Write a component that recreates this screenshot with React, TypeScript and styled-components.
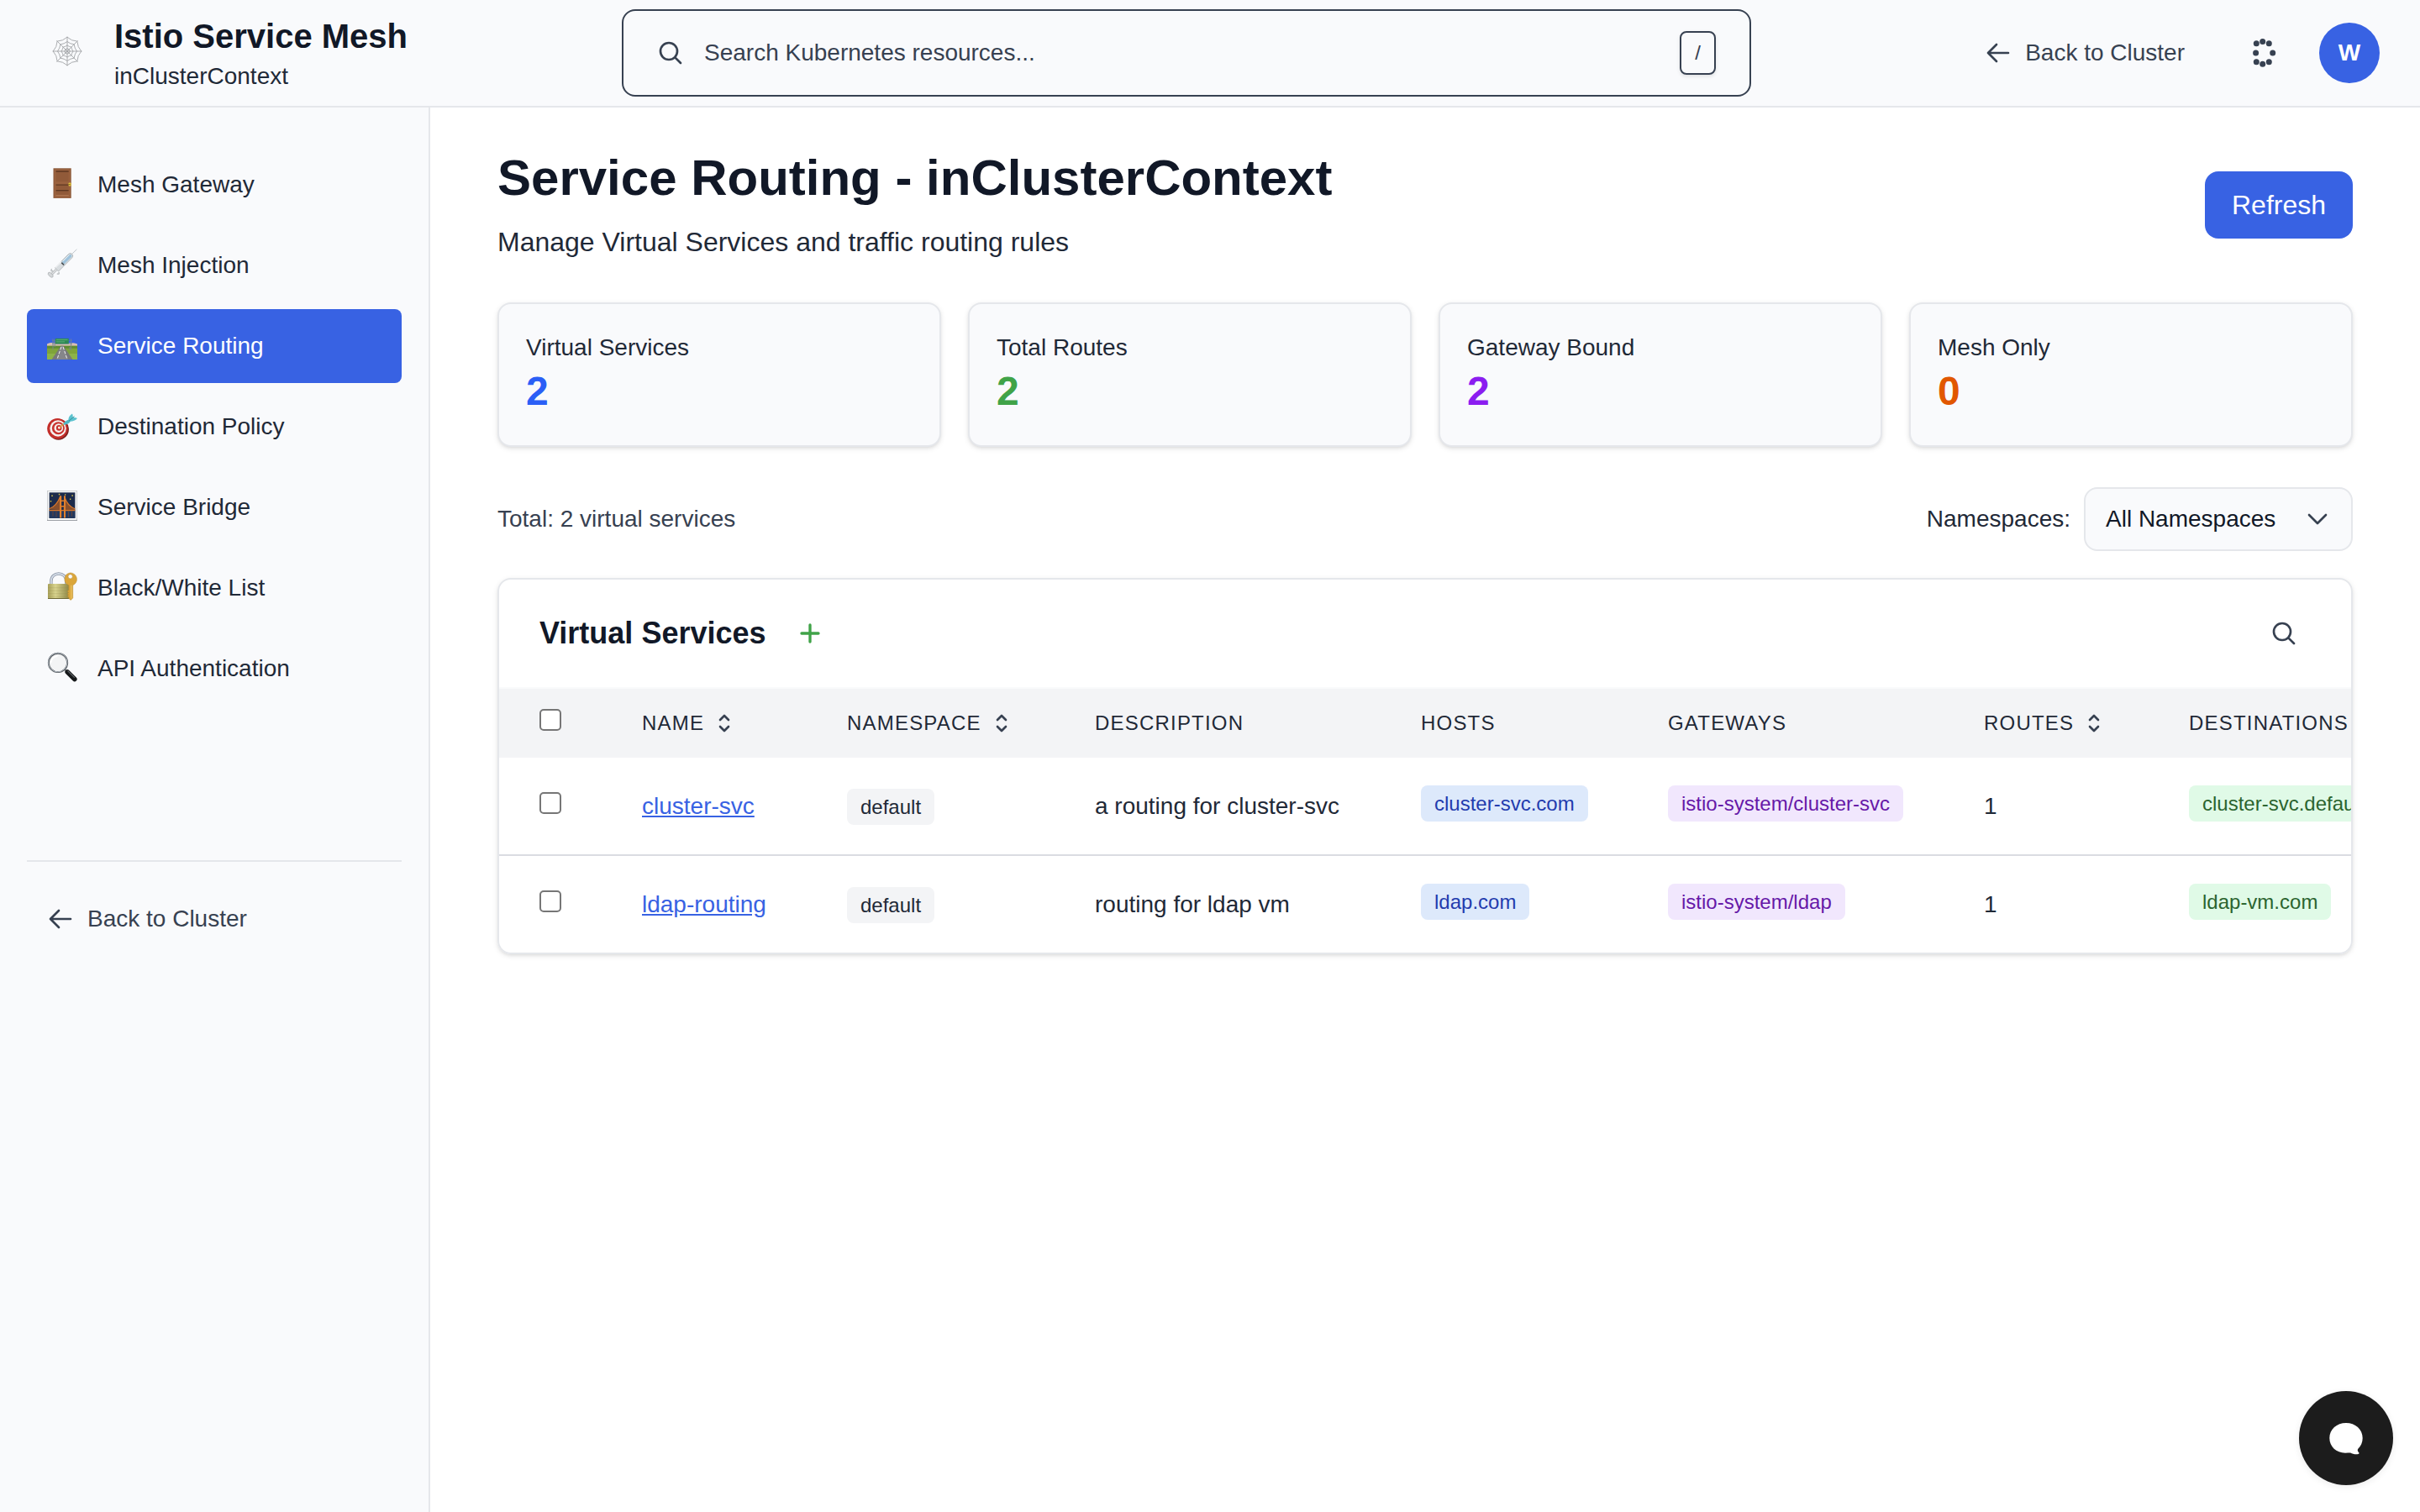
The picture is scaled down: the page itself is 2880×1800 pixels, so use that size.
import React from "react";
import styled, { createGlobalStyle, css } from "styled-components";

const Global = createGlobalStyle`
  * { box-sizing: border-box; }
  html, body { margin: 0; padding: 0; }
  body {
    background: #ffffff;
    font-family: "Liberation Sans", Arial, Helvetica, sans-serif;
    font-size: 28px;
    line-height: 40px;
    color: #1f2937;
    overflow: hidden;
  }
`;

const color = {
  surface: "#f9fafc",
  border: "#e5e7eb",
  ink: "#111827",
  text: "#1f2937",
  muted: "#374151",
  blue: "#3862e3",
};

/* ---------- icons ---------- */

const Glyph = styled.svg<{ $size?: number; $stroke?: number }>`
  display: block;
  flex: none;
  width: ${(p) => p.$size ?? 32}px;
  height: ${(p) => p.$size ?? 32}px;
  fill: none;
  stroke: currentColor;
  stroke-width: ${(p) => p.$stroke ?? 2};
  stroke-linecap: round;
  stroke-linejoin: round;
`;

const Icon = ({ d, stroke, size }: { d: string; stroke?: number; size?: number }) => (
  <Glyph viewBox="0 0 24 24" $stroke={stroke} $size={size}>
    <path d={d} />
  </Glyph>
);

const paths = {
  search: "m21 21-5.197-5.197m0 0A7.5 7.5 0 1 0 5.196 5.196a7.5 7.5 0 0 0 10.607 10.607Z",
  arrowLeft: "M10.5 19.5 3 12m0 0 7.5-7.5M3 12h18",
  chevronDown: "m19.5 8.25-7.5 7.5-7.5-7.5",
  sort: "M8.25 15 12 18.75 15.75 15m-7.5-6L12 5.25 15.75 9",
  plus: "M12 4.5v15m7.5-7.5h-15",
};

const Emoji = styled.svg`
  display: block;
  flex: none;
  width: 36px;
  height: 36px;
  margin-bottom: 4px;
  overflow: visible;
`;

const ring = (r: number, sag: number) => {
  const pts = Array.from({ length: 8 }, (_, i) => {
    const a = (i * Math.PI) / 4;
    return [18 + r * Math.sin(a), 18 - r * Math.cos(a)];
  });
  let d = `M${pts[0][0].toFixed(1)} ${pts[0][1].toFixed(1)}`;
  for (let i = 0; i < 8; i++) {
    const a = ((i + 0.5) * Math.PI) / 4;
    const n = pts[(i + 1) % 8];
    d += `Q${(18 + r * sag * Math.sin(a)).toFixed(1)} ${(18 - r * sag * Math.cos(a)).toFixed(1)} ${n[0].toFixed(1)} ${n[1].toFixed(1)}`;
  }
  return d + "Z";
};

const WebIcon = () => (
  <Emoji viewBox="0 0 36 36" fill="none" stroke="#a3a5a8" strokeWidth="0.9">
    <path d="M18 .5v35M.5 18h35M5.4 5.4l25.2 25.2M30.6 5.4 5.4 30.6" />
    <path d={ring(16.8, 0.78)} />
    <path d={ring(11.5, 0.82)} />
    <path d={ring(7, 0.84)} />
    <path d={ring(3.2, 0.9)} />
  </Emoji>
);

const DoorIcon = () => (
  <Emoji viewBox="0 0 36 36">
    <rect x="7.5" y="0.3" width="21.2" height="35.6" fill="#8a5637" />
    <rect x="8.6" y="1.4" width="19" height="34" fill="#9b623f" />
    <path d="M10.5 3.6h15.2v12.6H10.5z" fill="#915a39" />
    <path d="M10.5 3.3h15.2v1.4H10.5zM10.5 19.5h15.2v1.2H10.5zM10.5 26h15.2v1.5H10.5z" fill="#5d3721" />
    <path d="M10.5 21h15.2v4.6H10.5zM10.5 28h15.2v4H10.5z" fill="#915a39" />
    <path d="M10.5 32h15.2v.9H10.5z" fill="#b07a55" />
    <rect x="25.6" y="17.4" width="3" height="4.2" rx="0.8" fill="#e2c43c" />
    <rect x="25.2" y="19" width="2.4" height="1.1" fill="#8d7420" />
  </Emoji>
);

const SyringeIcon = () => (
  <Emoji viewBox="0 0 36 36">
    <path d="M29.5 6.5 35.4.8" stroke="#b9c0c5" strokeWidth="0.9" />
    <path d="M5.6 24.2c-1.6 2.2-.2 3 1.6 2.2M11.8 29.8c2.6 1 3-.4 2-2" stroke="#b4b8ba" strokeWidth="1.3" fill="none" />
    <path d="m9.4 22.9 15.7-16c1.8-1.8 3.8-1.6 5 0 1 1.4.6 3-.8 4.4L13.6 27z" fill="#d9dde0" stroke="#a7adb1" strokeWidth="0.8" />
    <path d="M17.6 15.9 25.7 7.7c1.3-1.2 2.6-1 3.3 0 .6.9.4 1.9-.6 2.9L20.3 18.6z" fill="#9fc3dc" />
    <path d="m19 14.9 7.6-7.6" stroke="#dcecf6" strokeWidth="1" />
    <path d="m16.6 17.2 2.9 2.9 1.2-1.2-2.9-2.9z" fill="#4a5054" />
    <path d="m9.8 22.6 7.2-7" stroke="#f7f8f9" strokeWidth="1.3" />
    <path d="m5 31 6-6" stroke="#aeb2b5" strokeWidth="2.8" />
    <path d="m5 31 6-6" stroke="#e4e6e7" strokeWidth="1.3" />
    <ellipse cx="4.2" cy="31.2" rx="3.7" ry="2" transform="rotate(45 4.2 31.2)" fill="#d5d8da" stroke="#a9adb0" strokeWidth="0.7" />
  </Emoji>
);

const MotorwayIcon = () => (
  <Emoji viewBox="0 0 36 36">
    <g transform="translate(0 1)">
      <path d="M0 16.5c4-2.2 8-1.4 12-.8h13c4-.8 8-.2 11 .8v3H0z" fill="#d9bfb4" />
      <path d="M0 18.8h36V35H0z" fill="#7fa43a" />
      <path d="M0 18.8h36v3H0z" fill="#5f8c33" />
      <path d="M0 28h36v7H0z" fill="#8db348" />
      <path d="M16.5 18.8h3L30.5 35h-25z" fill="#77787a" />
      <path d="M16.8 18.8h2.4L25 35H11z" fill="#85868a" />
      <path d="m16.9 20-5 15M19.1 20l5 15" stroke="#f2f2f2" strokeWidth="1" strokeDasharray="3.5 1.8" />
      <path d="M7 10.500v13M9.200 11v9M28.600 10.500v13M27 20v4" stroke="#7c8690" strokeWidth="0.9" />
      <path d="M6 12.5h24M6 16h24" stroke="#5d7f9e" strokeWidth="0.8" />
      <rect x="9.8" y="9.9" width="16" height="6.5" fill="#2f8a54" />
      <path d="M11 11.600h13.500M11 13.900h10" stroke="#66b583" strokeWidth="0.8" />
    </g>
  </Emoji>
);

const TargetIcon = () => (
  <Emoji viewBox="0 0 36 36">
    <g transform="translate(0 2)">
      <ellipse cx="13.6" cy="21.2" rx="12.300" ry="12.500" fill="#7c1f1c" />
      <circle cx="12.4" cy="20.3" r="12.2" fill="#c42f2b" />
      <circle cx="13" cy="20" r="9.7" fill="#f6f1ef" />
      <circle cx="13.4" cy="19.8" r="7.5" fill="#c9322e" />
      <circle cx="13.8" cy="19.6" r="5.3" fill="#f6f1ef" />
      <circle cx="14.2" cy="19.4" r="3.3" fill="#c9322e" />
      <circle cx="14.5" cy="19.2" r="1.4" fill="#fff" />
      <path d="m14.8 19 7-6" stroke="#d9a441" strokeWidth="1.4" />
      <path d="M19.4 15.600c0-2.600 2.400-4.600 6.400-6.200l2.200 2.200c-2 3-4.800 4.400-8.600 4z" fill="#4fb6c4" />
      <path d="M25.4 10.200C25.400 6.800 27 4.200 30 2.600c.8 1.800.9 3.200.6 4.600 1.900-.4 3.800-.1 5.400.8-2 2.600-5.200 3.800-8.600 3.800z" fill="#5cc3cf" />
      <path d="m26 11 6.500-5.400" stroke="#2c8391" strokeWidth="0.9" />
    </g>
  </Emoji>
);

const BridgeIcon = () => (
  <Emoji viewBox="0 0 36 36">
    <rect x="0.4" y="0.4" width="35.2" height="35.2" fill="#fbfbfb" stroke="#c3c6c9" strokeWidth="0.8" />
    <path d="M0 35.4h36" stroke="#989ca1" strokeWidth="1" />
    <rect x="2.6" y="2.3" width="30.8" height="30.6" fill="#1c2b4b" />
    <rect x="2.6" y="23.4" width="30.8" height="9.5" fill="#23385e" />
    <path d="M2.6 22.5C9 20.5 12.5 15 15 7.5h1.5V23zM20.5 7c2 6.5 6 12.5 12.9 15.5v1H19.5z" fill="#a55a24" opacity="0.8" />
    <path d="M2.6 21.8C9 19.8 13 14 15.8 7M20.5 7c2.2 6.5 6 12.5 12.9 15M2.6 23.6h30.8" stroke="#d9772a" strokeWidth="1.2" fill="none" />
    <path d="M15 6.3h2.2v26.2H15zM20 6.3h2v26.2h-2zM15.6 11.5h6V13h-6zM15.6 18h6v1.5h-6z" fill="#e07f2c" />
    <path d="M7 24.5v6M11 24.5v7M25.5 24.5v7M29.5 24.5v6" stroke="#6e4534" strokeWidth="0.8" />
    <path d="M5.3 5.5h1.5V7H5.300zM13.800 3.800h1.500v1.500h-1.500zM21 4.300h1.300v1.300H21zM29.400 5.300h1.500v1.500h-1.500zM3.800 12h1.400v1.400H3.800zM27 9.600h1.300v1.300H27z" fill="#d9c64a" />
  </Emoji>
);

const LockKeyIcon = () => (
  <Emoji viewBox="0 0 36 36">
    <defs>
      <linearGradient id="lockBody" x1="0" x2="1">
        <stop offset="0" stopColor="#a79f58" />
        <stop offset="0.35" stopColor="#d8d38e" />
        <stop offset="1" stopColor="#8e8645" />
      </linearGradient>
    </defs>
    <g transform="translate(0 0.700)">
      <path d="M4.900 16v-4.800C4.900 5.500 9 2.300 13.800 2.300c4.900 0 9 3.200 9 8.900V16" fill="none" stroke="#8e98a8" strokeWidth="3.4" />
      <path d="M4.900 16v-4.800C4.900 5.500 9 2.300 13.800 2.300c4.900 0 9 3.200 9 8.900V16" fill="none" stroke="#d3dbe6" strokeWidth="1.8" />
      <rect x="1" y="14.200" width="25.5" height="18" rx="1" fill="url(#lockBody)" />
      <path d="M1 19h25.500M1 22.500h25.500M1 26h25.500M1 29.500h25.500" stroke="#8c8548" strokeWidth="0.5" opacity="0.4" />
      <path d="M1 31.800h25.500" stroke="#6e6834" strokeWidth="1" />
      <path d="M27.700 1.200a7.700 7.700 0 0 1 3 14.800v15.200l-2.500 2.600-2.400-2.200V30l-1.700-1 1.700-1.500-1.700-1.300 1.700-1.500-1.700-1.300 1.700-1.500V16a7.700 7.700 0 0 1 1.900-14.800z" fill="#dba63a" stroke="#b98a30" strokeWidth="0.5" />
      <path d="M28.900 16v16" stroke="#f0cd74" strokeWidth="0.9" />
      <circle cx="27.7" cy="5.6" r="2.6" fill="#f9fafc" stroke="#b98a30" strokeWidth="0.5" />
    </g>
  </Emoji>
);

const MagnifierIcon = () => (
  <Emoji viewBox="0 0 36 36">
    <path d="m21 21 4 4" stroke="#7f8488" strokeWidth="2.4" />
    <path d="m24.2 24 8.600 8.600" stroke="#16181a" strokeWidth="5.600" strokeLinecap="round" />
    <path d="m24.800 22.800 7.600 7.600" stroke="#62676c" strokeWidth="1.1" strokeLinecap="round" />
    <circle cx="13" cy="12.9" r="11.2" fill="#f3f4f5" stroke="#4d5257" strokeWidth="1.9" />
    <circle cx="12.8" cy="12.6" r="11.3" fill="none" stroke="#b9c1c9" strokeWidth="0.9" />
    <path d="M4.500 13a8.500 8.500 0 0 1 8-8" stroke="#fff" strokeWidth="1.8" fill="none" />
  </Emoji>
);

/* ---------- header ---------- */

const Page = styled.div`
  display: flex;
  flex-direction: column;
  width: 2880px;
  height: 1800px;
`;

const Header = styled.header`
  flex: none;
  height: 128px;
  display: grid;
  grid-template-columns: 740px 1344px 1fr;
  align-items: center;
  background: ${color.surface};
  border-bottom: 2px solid ${color.border};
`;

const Brand = styled.div`
  display: flex;
  align-items: center;
  gap: 38px;
  padding-left: 62px;
`;

const BrandText = styled.div`
  padding-bottom: 1px;
`;

const BrandName = styled.div`
  font-size: 40px;
  line-height: 56px;
  font-weight: 700;
  color: ${color.ink};
`;

const BrandContext = styled.div`
  font-size: 28px;
  line-height: 39px;
  color: ${color.text};
`;

const SearchBox = styled.div`
  height: 104px;
  display: flex;
  align-items: center;
  gap: 24px;
  padding: 0 40px;
  border: 2px solid ${color.muted};
  border-radius: 16px;
  color: ${color.muted};
`;

const SearchHint = styled.span`
  flex: 1;
`;

const Kbd = styled.kbd`
  display: flex;
  align-items: center;
  justify-content: center;
  width: 43px;
  height: 52px;
  border: 2px solid ${color.muted};
  border-radius: 8px;
  font-family: inherit;
  font-size: 24px;
  line-height: 32px;
  box-shadow: 0 2px 4px rgba(0, 0, 0, 0.1);
`;

const Actions = styled.div`
  display: flex;
  align-items: center;
  justify-content: flex-end;
  padding-right: 48px;
  color: ${color.muted};
`;

const BackLink = styled.a<{ $side?: boolean }>`
  display: flex;
  align-items: center;
  gap: 16px;
  color: ${color.muted};
  ${(p) =>
    p.$side &&
    css`
      height: 88px;
      margin-top: 24px;
      padding-left: 24px;
    `}
  span {
    padding-bottom: 1px;
  }
`;

const Spinner = styled.svg`
  width: 32px;
  height: 32px;
  margin: 0 51px 0 77px;
  overflow: visible;
  fill: currentColor;
`;

const Avatar = styled.div`
  width: 72px;
  height: 72px;
  display: flex;
  align-items: center;
  justify-content: center;
  padding-bottom: 1px;
  border-radius: 50%;
  background: ${color.blue};
  color: #ffffff;
  font-weight: 700;
`;

const dots = [
  [15.7, 2.4], [23.3, 4.8], [27.7, 16], [23.3, 26.8],
  [15.7, 29.2], [8.3, 26.8], [7.6, 16], [8.3, 4.8],
];

/* ---------- sidebar ---------- */

const Body = styled.div`
  flex: 1;
  display: flex;
  min-height: 0;
`;

const Sidebar = styled.aside`
  flex: none;
  width: 512px;
  padding: 48px 32px;
  background: ${color.surface};
  border-right: 2px solid ${color.border};
`;

const NavList = styled.nav`
  display: flex;
  flex-direction: column;
  gap: 8px;
  height: 848px;
`;

const NavItem = styled.a<{ $active?: boolean }>`
  display: flex;
  align-items: center;
  gap: 24px;
  height: 88px;
  padding: 0 24px;
  border-radius: 8px;
  background: ${(p) => (p.$active ? color.blue : "transparent")};
  color: ${(p) => (p.$active ? "#ffffff" : color.text)};
`;

const NavLabel = styled.span`
  padding-bottom: 1px;
`;

const SidebarFoot = styled.div`
  border-top: 2px solid ${color.border};
`;

const navItems = [
  { label: "Mesh Gateway", icon: <DoorIcon /> },
  { label: "Mesh Injection", icon: <SyringeIcon /> },
  { label: "Service Routing", icon: <MotorwayIcon />, active: true },
  { label: "Destination Policy", icon: <TargetIcon /> },
  { label: "Service Bridge", icon: <BridgeIcon /> },
  { label: "Black/White List", icon: <LockKeyIcon /> },
  { label: "API Authentication", icon: <MagnifierIcon /> },
];

/* ---------- main ---------- */

const Main = styled.main`
  flex: 1;
  min-width: 0;
  padding: 48px 80px;
`;

const TitleRow = styled.div`
  display: flex;
  align-items: center;
  justify-content: space-between;
  margin-bottom: 48px;
`;

const PageTitle = styled.h1`
  margin: 0 0 16px;
  font-size: 60px;
  line-height: 72px;
  font-weight: 700;
  color: ${color.ink};
`;

const PageSubtitle = styled.p`
  margin: 0;
  font-size: 32px;
  line-height: 48px;
`;

const RefreshButton = styled.button`
  width: 176px;
  height: 80px;
  padding: 0 0 1px;
  border: 0;
  border-radius: 16px;
  background: ${color.blue};
  color: #ffffff;
  font: inherit;
  font-size: 32px;
`;

const Stats = styled.section`
  display: grid;
  grid-template-columns: repeat(4, 1fr);
  gap: 32px;
  margin-bottom: 48px;
`;

const shadow = "0 2px 6px rgba(0,0,0,0.1), 0 2px 4px -2px rgba(0,0,0,0.1)";

const StatCard = styled.div`
  height: 172px;
  padding: 32px;
  border: 2px solid ${color.border};
  border-radius: 16px;
  background: ${color.surface};
  box-shadow: ${shadow};
`;

const StatValue = styled.div<{ $tone: string }>`
  font-size: 48px;
  line-height: 64px;
  font-weight: 700;
  color: ${(p) => p.$tone};
`;

const stats = [
  { label: "Virtual Services", value: 2, tone: "#2b5ff6" },
  { label: "Total Routes", value: 2, tone: "#40a348" },
  { label: "Gateway Bound", value: 2, tone: "#8b1df0" },
  { label: "Mesh Only", value: 0, tone: "#e15700" },
];

const FilterRow = styled.div`
  display: flex;
  align-items: center;
  margin-bottom: 32px;
  > span {
    padding-bottom: 1px;
  }
`;

const Total = styled.span`
  flex: 1;
  color: ${color.muted};
`;

const Select = styled.div`
  display: flex;
  align-items: center;
  justify-content: space-between;
  width: 320px;
  height: 76px;
  margin-left: 16px;
  padding: 0 24px;
  border: 2px solid ${color.border};
  border-radius: 16px;
  background: ${color.surface};
  color: ${color.muted};
  > span {
    padding-bottom: 1px;
    color: ${color.ink};
  }
`;

const Panel = styled.section`
  height: 448px;
  border: 2px solid ${color.border};
  border-radius: 16px;
  overflow: hidden;
  box-shadow: ${shadow};
`;

const PanelHead = styled.div`
  display: flex;
  align-items: center;
  height: 130px;
  padding: 0 48px;
  border-bottom: 2px solid #f9fafb;
`;

const PanelTitle = styled.h2`
  margin: 0;
  font-size: 36px;
  line-height: 56px;
  font-weight: 700;
  color: ${color.ink};
`;

const IconButton = styled.button<{ $tone: string; $end?: boolean }>`
  display: flex;
  padding: 16px;
  border: 0;
  background: none;
  color: ${(p) => p.$tone};
  margin-left: ${(p) => (p.$end ? "auto" : "20px")};
`;

const Table = styled.table`
  width: 2500px;
  table-layout: fixed;
  border-collapse: separate;
  border-spacing: 0;
`;

const Th = styled.th`
  height: 82px;
  padding: 0 48px;
  background: #f3f4f6;
  text-align: left;
  vertical-align: middle;
  font-size: 24px;
  line-height: 32px;
  font-weight: 400;
  letter-spacing: 1.2px;
  white-space: nowrap;
  color: ${color.text};
`;

const ThLabel = styled.div`
  display: flex;
  align-items: center;
  gap: 8px;
  color: ${color.muted};
  span {
    color: ${color.text};
  }
`;

const Row = styled.tr`
  td {
    border-bottom: 2px solid #dadce2;
  }
  &:last-child td {
    border-bottom: 0;
  }
`;

const Td = styled.td<{ $top: number }>`
  height: 117px;
  padding: ${(p) => p.$top}px 48px 0;
  vertical-align: top;
  white-space: nowrap;
`;

const Checkbox = styled.span`
  display: block;
  width: 26px;
  height: 26px;
  border: 2px solid #767676;
  border-radius: 5px;
  background: #ffffff;
`;

const HeadCheckbox = styled(Checkbox)`
  margin-bottom: 8px;
`;

const NameLink = styled.a`
  color: ${color.blue};
  text-decoration: underline;
`;

const tones = {
  gray: ["#f3f4f6", "#1f2937"],
  blue: ["#dde9fb", "#233cae"],
  purple: ["#f1e7fd", "#6618a8"],
  green: ["#e0fae7", "#2b642f"],
} as const;

const Badge = styled.span<{ $tone: keyof typeof tones }>`
  display: block;
  width: max-content;
  height: 43px;
  padding: 0 16px;
  border-radius: 8px;
  font-size: 24px;
  line-height: 43px;
  background: ${(p) => tones[p.$tone][0]};
  color: ${(p) => tones[p.$tone][1]};
`;

const columns = [
  { label: "NAME", width: 244, sortable: true },
  { label: "NAMESPACE", width: 295, sortable: true },
  { label: "DESCRIPTION", width: 388 },
  { label: "HOSTS", width: 294 },
  { label: "GATEWAYS", width: 376 },
  { label: "ROUTES", width: 244, sortable: true },
  { label: "DESTINATIONS", width: 537 },
];

const services = [
  {
    name: "cluster-svc",
    namespace: "default",
    description: "a routing for cluster-svc",
    host: "cluster-svc.com",
    gateway: "istio-system/cluster-svc",
    routes: 1,
    destination: "cluster-svc.default.svc",
  },
  {
    name: "ldap-routing",
    namespace: "default",
    description: "routing for ldap vm",
    host: "ldap.com",
    gateway: "istio-system/ldap",
    routes: 1,
    destination: "ldap-vm.com",
  },
];

const ChatButton = styled.button`
  position: fixed;
  right: 32px;
  bottom: 32px;
  width: 112px;
  height: 112px;
  padding: 0;
  border: 0;
  border-radius: 50%;
  background: #1c1c1c;
  box-shadow: 0 2px 8px rgba(0, 0, 0, 0.08);
  svg {
    display: block;
  }
`;

export default function App() {
  return (
    <Page>
      <Global />
      <Header>
        <Brand>
          <WebIcon />
          <BrandText>
            <BrandName>Istio Service Mesh</BrandName>
            <BrandContext>inClusterContext</BrandContext>
          </BrandText>
        </Brand>
        <SearchBox>
          <Icon d={paths.search} />
          <SearchHint>Search Kubernetes resources...</SearchHint>
          <Kbd>/</Kbd>
        </SearchBox>
        <Actions>
          <BackLink>
            <Icon d={paths.arrowLeft} />
            <span>Back to Cluster</span>
          </BackLink>
          <Spinner viewBox="0 0 32 32">
            {dots.map(([x, y], i) => (
              <circle key={i} cx={x} cy={y} r="3.5" />
            ))}
          </Spinner>
          <Avatar>W</Avatar>
        </Actions>
      </Header>
      <Body>
        <Sidebar>
          <NavList>
            {navItems.map((item) => (
              <NavItem key={item.label} $active={item.active}>
                {item.icon}
                <NavLabel>{item.label}</NavLabel>
              </NavItem>
            ))}
          </NavList>
          <SidebarFoot>
            <BackLink $side>
              <Icon d={paths.arrowLeft} />
              <span>Back to Cluster</span>
            </BackLink>
          </SidebarFoot>
        </Sidebar>
        <Main>
          <TitleRow>
            <div>
              <PageTitle>Service Routing - inClusterContext</PageTitle>
              <PageSubtitle>Manage Virtual Services and traffic routing rules</PageSubtitle>
            </div>
            <RefreshButton>Refresh</RefreshButton>
          </TitleRow>
          <Stats>
            {stats.map((s) => (
              <StatCard key={s.label}>
                <div>{s.label}</div>
                <StatValue $tone={s.tone}>{s.value}</StatValue>
              </StatCard>
            ))}
          </Stats>
          <FilterRow>
            <Total>Total: 2 virtual services</Total>
            <span>Namespaces:</span>
            <Select>
              <span>All Namespaces</span>
              <Icon d={paths.chevronDown} />
            </Select>
          </FilterRow>
          <Panel>
            <PanelHead>
              <PanelTitle>Virtual Services</PanelTitle>
              <IconButton $tone="#40a348">
                <Icon d={paths.plus} stroke={2.5} />
              </IconButton>
              <IconButton $tone={color.muted} $end>
                <Icon d={paths.search} />
              </IconButton>
            </PanelHead>
            <Table>
              <colgroup>
                <col width={122} />
                {columns.map((c) => (
                  <col key={c.label} width={c.width} />
                ))}
              </colgroup>
              <thead>
                <tr>
                  <Th>
                    <HeadCheckbox />
                  </Th>
                  {columns.map((c) => (
                    <Th key={c.label}>
                      <ThLabel>
                        <span>{c.label}</span>
                        {c.sortable && <Icon d={paths.sort} />}
                      </ThLabel>
                    </Th>
                  ))}
                </tr>
              </thead>
              <tbody>
                {services.map((s) => (
                  <Row key={s.name}>
                    <Td $top={41}>
                      <Checkbox />
                    </Td>
                    <Td $top={38}>
                      <NameLink>{s.name}</NameLink>
                    </Td>
                    <Td $top={37}>
                      <Badge $tone="gray">{s.namespace}</Badge>
                    </Td>
                    <Td $top={38}>{s.description}</Td>
                    <Td $top={33}>
                      <Badge $tone="blue">{s.host}</Badge>
                    </Td>
                    <Td $top={33}>
                      <Badge $tone="purple">{s.gateway}</Badge>
                    </Td>
                    <Td $top={38}>{s.routes}</Td>
                    <Td $top={33}>
                      <Badge $tone="green">{s.destination}</Badge>
                    </Td>
                  </Row>
                ))}
              </tbody>
            </Table>
          </Panel>
        </Main>
      </Body>
      <ChatButton>
        <svg width="112" height="112" viewBox="0 0 112 112" fill="#ffffff">
          <path d="M56 38C45 38 36.300 45.600 36.300 56c0 10.200 8.200 17.700 18.700 17.700 2.200 0 4.300-.2 6.200-.2 2.600 1.600 6.400 2.100 9.400 1.500 1.300-.3 1.200-1.100.4-1.900-1.200-1.200-1.600-2.900-.9-4.100 3.500-3.300 5.600-7.800 5.600-13C75.700 45.600 67 38 56 38z" />
        </svg>
      </ChatButton>
    </Page>
  );
}
